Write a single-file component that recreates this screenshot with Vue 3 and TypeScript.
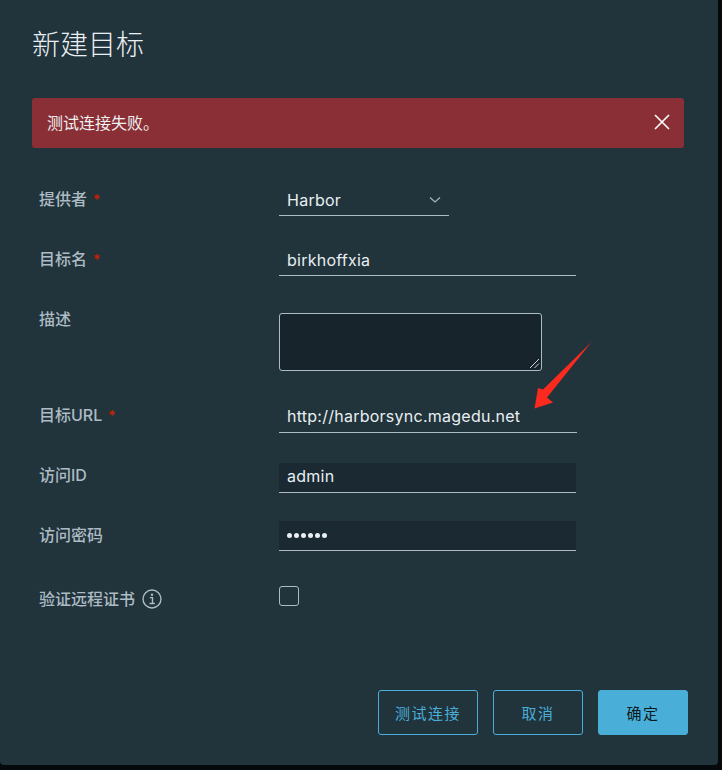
<script setup lang="ts">
const title = '新建目标'
const alertText = '测试连接失败。'
</script>

<template>
  <div class="page">
    <section class="panel">
      <h1 class="title">{{ title }}</h1>
      <div class="alert">
        <span>{{ alertText }}</span>
        <svg class="close" width="16" height="16" viewBox="0 0 16 16">
          <path d="M1 1L15 15M15 1L1 15" stroke="#ffffff" stroke-width="1.6" fill="none" />
        </svg>
      </div>

      <form class="form" @submit.prevent>
        <div class="row row-provider">
          <label class="label">提供者<i class="req">*</i></label>
          <div class="select">
            <span>Harbor</span>
            <svg width="12" height="8" viewBox="0 0 12 8">
              <path d="M1 1.5L6 6L11 1.5" stroke="#a9b6be" stroke-width="1.2" fill="none" />
            </svg>
          </div>
        </div>

        <div class="row row-name">
          <label class="label">目标名<i class="req">*</i></label>
          <div class="input">birkhoffxia</div>
        </div>

        <div class="row row-desc">
          <label class="label">描述</label>
          <div class="textarea">
            <svg class="grip" width="11" height="11" viewBox="0 0 11 11">
              <path d="M1 10L10 1M5.5 10L10 5.500" stroke="#c9d2d6" stroke-width="1" fill="none" />
            </svg>
          </div>
        </div>

        <div class="row row-url">
          <label class="label">目标URL<i class="req">*</i></label>
          <div class="input wide">http://harborsync.magedu.net</div>
        </div>

        <div class="row row-id">
          <label class="label">访问ID</label>
          <div class="input filled">admin</div>
        </div>

        <div class="row row-pass">
          <label class="label">访问密码</label>
          <div class="input filled dots">
            <i v-for="n in 6" :key="n" class="dot"></i>
          </div>
        </div>

        <div class="row row-check">
          <label class="label with-icon">
            <span>验证远程证书</span>
            <svg class="info" width="20" height="20" viewBox="0 0 20 20">
              <circle cx="10" cy="10" r="9" stroke="#adbbc4" stroke-width="1.4" fill="none" />
              <circle cx="10" cy="5.800" r="1.200" fill="#adbbc4" />
              <path d="M7.800 8.600H10.500V14.200M7.500 14.500H12.800" stroke="#adbbc4" stroke-width="1.400" fill="none" />
            </svg>
          </label>
          <div class="checkbox"></div>
        </div>
      </form>

      <footer class="actions">
        <button class="btn outline test" type="button">测试连接</button>
        <button class="btn outline cancel" type="button">取消</button>
        <button class="btn primary" type="button">确定</button>
      </footer>

      <svg class="arrow" width="60" height="70" viewBox="0 0 60 70">
        <path d="M0.500 67.500L19 61.500L13 56.500L57.500 1L9 48.500L4 47Z" fill="#fb2a1e" />
      </svg>
    </section>
  </div>
</template>

<style>
html, body {
  margin: 0;
  background: #05090b;
}
</style>

<style scoped>
.page {
  width: 722px;
  height: 770px;
  overflow: hidden;
  background: #05090b;
  font-family: "Inter", "Noto Sans CJK SC", sans-serif;
}
.panel {
  position: relative;
  box-sizing: border-box;
  width: 718px;
  height: 765px;
  padding: 0 34px 0 32px;
  background: #21333b;
  border-radius: 0 0 4px 4px;
  display: flex;
  flex-direction: column;
}
.title {
  margin: 25px 0 0 0;
  height: 40px;
  font-size: 28px;
  line-height: 40px;
  font-weight: 300;
  color: #e9eff2;
}
.alert {
  box-sizing: border-box;
  margin-top: 33px;
  width: 652px;
  height: 50px;
  padding: 0 14px 0 15px;
  display: flex;
  align-items: center;
  justify-content: space-between;
  background: #8a2f35;
  border-radius: 3px;
  font-size: 16px;
  color: #eef1f2;
}
.alert span {
  position: relative;
  top: -1px;
}
.close {
  display: block;
  margin-top: -3px;
}
.form {
  padding-left: 7px;
  display: flex;
  flex-direction: column;
}
.row {
  display: flex;
  align-items: flex-start;
}
.row-provider { margin-top: 37px; }
.row-name { margin-top: 29px; }
.row-desc { margin-top: 37px; }
.row-url { margin-top: 31px; }
.row-id { margin-top: 30px; }
.row-pass { margin-top: 28px; }
.row-check { margin-top: 35px; }
.label {
  width: 240px;
  flex: none;
  font-size: 16px;
  line-height: 28px;
  font-weight: 500;
  color: #adbbc4;
}
.row-desc .label { margin-top: -8px; }
.row-url .label { margin-top: -1px; }
.row-id .label { margin-top: -2px; }
.row-check .label { margin-top: -1px; }
.req {
  margin-left: 6px;
  font-style: normal;
  font-size: 14px;
  color: #c92100;
}
.with-icon {
  display: flex;
  align-items: center;
  gap: 7px;
}
.info { display: block; }
.select, .input {
  box-sizing: border-box;
  height: 31px;
  padding: 0 8px;
  border-bottom: 1px solid #adbbc4;
  font-size: 16px;
  line-height: 30px;
  letter-spacing: 0.25px;
  color: #e9eff2;
}
.select {
  width: 170px;
  display: flex;
  align-items: center;
  justify-content: space-between;
  padding-right: 8px;
}
.input { width: 297px; }
.input.wide {
  width: 298px;
  line-height: 28px;
}
.input.filled {
  height: 30px;
  line-height: 26px;
  background: #1b2a32;
}
.dots {
  display: flex;
  align-items: center;
  gap: 2px;
}
.dot {
  width: 5px;
  height: 5px;
  border-radius: 50%;
  background: #e9eff2;
}
.textarea {
  position: relative;
  box-sizing: border-box;
  width: 263px;
  height: 58px;
  background: #17242b;
  border: 1px solid #adbbc4;
  border-radius: 3px;
}
.grip {
  position: absolute;
  right: 1px;
  bottom: 1px;
}
.checkbox {
  box-sizing: border-box;
  width: 20px;
  height: 20px;
  border: 1px solid #adbbc4;
  border-radius: 3px;
}
.actions {
  margin-top: 77px;
  margin-right: -4px;
  display: flex;
  justify-content: flex-end;
  gap: 15px;
}
.btn {
  box-sizing: border-box;
  height: 45px;
  border-radius: 3px;
  font-family: inherit;
  font-size: 15px;
  letter-spacing: 1.5px;
  padding: 0;
}
.outline {
  background: transparent;
  border: 1px solid #49afd9;
  color: #49afd9;
}
.test { width: 100px; }
.cancel { width: 90px; }
.primary {
  width: 90px;
  background: #49afd9;
  border: 1px solid #49afd9;
  color: #0e1a20;
}
.arrow {
  position: absolute;
  left: 534px;
  top: 341px;
}
</style>
